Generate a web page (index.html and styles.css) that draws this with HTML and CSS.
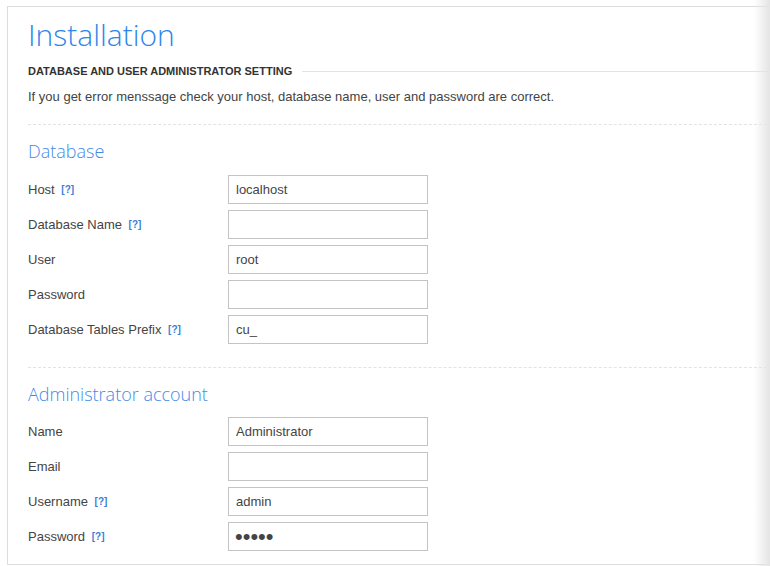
FILE: index.html
```html
<!DOCTYPE html>
<html>
<head>
<meta charset="utf-8">
<link rel="stylesheet" href="styles.css">
</head>
<body>
<div class="panel">
  <h1 class="title">Installation</h1>
  <div class="subhead"><span>DATABASE AND USER ADMINISTRATOR SETTING</span></div>
  <p class="desc">If you get error menssage check your host, database name, user and password are correct.</p>
  <div class="section">
    <h2 class="sec-title">Database</h2>
    <div class="row"><label class="lbl">Host <span class="help">[?]</span></label><input class="field" type="text" value="localhost"></div>
    <div class="row"><label class="lbl">Database Name <span class="help">[?]</span></label><input class="field" type="text" value=""></div>
    <div class="row"><label class="lbl">User</label><input class="field" type="text" value="root"></div>
    <div class="row"><label class="lbl">Password</label><input class="field" type="text" value=""></div>
    <div class="row"><label class="lbl">Database Tables Prefix <span class="help">[?]</span></label><input class="field" type="text" value="cu_"></div>
  </div>
  <div class="section">
    <h2 class="sec-title">Administrator account</h2>
    <div class="row"><label class="lbl">Name</label><input class="field" type="text" value="Administrator"></div>
    <div class="row"><label class="lbl">Email</label><input class="field" type="text" value=""></div>
    <div class="row"><label class="lbl">Username <span class="help">[?]</span></label><input class="field" type="text" value="admin"></div>
    <div class="row"><label class="lbl">Password <span class="help">[?]</span></label><input class="field pass" type="password" value="12345"></div>
  </div>
</div>
<div class="edge-shade"></div>
</body>
</html>
```
FILE: styles.css
```css
html, body {
  margin: 0;
  padding: 0;
  background: #fff;
  overflow: hidden;
  height: 566px;
}
body {
  font-family: "Liberation Sans", Arial, sans-serif;
  font-size: 13px;
  color: #444;
}
.panel {
  margin: 6px 0 0 7px;
  width: 820px;
  height: 559px;
  box-sizing: border-box;
  border: 1px solid #ddd;
  border-right: none;
  padding: 0 0 0 20px;
}
.title {
  font-family: "Open Sans", sans-serif;
  font-weight: 300;
  font-size: 30px;
  line-height: 36px;
  color: #2f86ea;
  margin: 10px 0 0 0;
}
.subhead {
  display: flex;
  align-items: center;
  margin-top: 10px;
  height: 16px;
}
.subhead span {
  font-size: 11px;
  font-weight: bold;
  color: #333;
  white-space: nowrap;
}
.subhead::after {
  content: "";
  flex: 1;
  border-top: 1px solid #e3e3e3;
  margin-left: 10px;
}
.desc {
  margin: 8px 0 0 0;
  line-height: 20px;
}
.section {
  border-top: 1px dashed #e3e3e3;
  margin-top: 17px;
  padding-top: 13px;
}
.section + .section {
  margin-top: 23px;
}
.sec-title {
  font-family: "Open Sans", sans-serif;
  font-weight: 300;
  font-size: 18px;
  line-height: 26px;
  color: #3f8be6;
  margin: 0 0 11px 0;
}
.section + .section .sec-title {
  margin-bottom: 10px;
}
.row {
  display: flex;
  align-items: center;
  height: 29px;
  margin-bottom: 6px;
}
.lbl {
  width: 200px;
  flex: none;
}
.help {
  color: #3a7fd5;
  font-size: 10px;
  font-weight: bold;
  margin-left: 3px;
  vertical-align: 1px;
}
.field {
  width: 200px;
  height: 29px;
  box-sizing: border-box;
  border: 1px solid #c4c4c4;
  border-radius: 0;
  padding: 0 7px;
  font-family: "Liberation Sans", Arial, sans-serif;
  font-size: 13px;
  color: #444;
  background: #fff;
  outline: none;
}
.field.pass {
  font-size: 22px;
  padding: 0 6px;
}
.edge-shade {
  position: absolute;
  top: 0;
  right: 0;
  width: 16px;
  height: 566px;
  background: linear-gradient(to right, rgba(235,235,235,0), rgba(228,228,228,1));
}
```
